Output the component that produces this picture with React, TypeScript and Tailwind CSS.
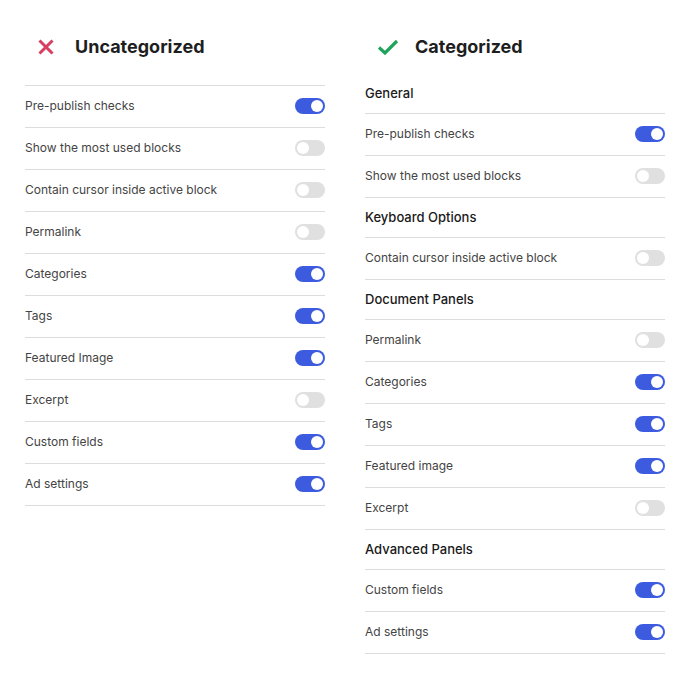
type Row = { label: string; on: boolean }

type Group = { title: string; rows: Row[] }

const flatRows: Row[] = [
  { label: "Pre-publish checks", on: true },
  { label: "Show the most used blocks", on: false },
  { label: "Contain cursor inside active block", on: false },
  { label: "Permalink", on: false },
  { label: "Categories", on: true },
  { label: "Tags", on: true },
  { label: "Featured Image", on: true },
  { label: "Excerpt", on: false },
  { label: "Custom fields", on: true },
  { label: "Ad settings", on: true },
]

const groups: Group[] = [
  {
    title: "General",
    rows: [
      { label: "Pre-publish checks", on: true },
      { label: "Show the most used blocks", on: false },
    ],
  },
  {
    title: "Keyboard Options",
    rows: [{ label: "Contain cursor inside active block", on: false }],
  },
  {
    title: "Document Panels",
    rows: [
      { label: "Permalink", on: false },
      { label: "Categories", on: true },
      { label: "Tags", on: true },
      { label: "Featured image", on: true },
      { label: "Excerpt", on: false },
    ],
  },
  {
    title: "Advanced Panels",
    rows: [
      { label: "Custom fields", on: true },
      { label: "Ad settings", on: true },
    ],
  },
]

function Toggle({ on }: { on: boolean }) {
  return (
    <span
      className={`flex h-4 w-[30px] items-center rounded-full px-[2px] ${
        on ? "justify-end bg-[#3d5bdf]" : "justify-start bg-[#e0e0e0]"
      }`}
    >
      <span className="h-3 w-3 rounded-full bg-white" />
    </span>
  )
}

function SettingRow({ row }: { row: Row }) {
  return (
    <div className="flex h-[42px] items-center justify-between border-b border-[#dcdcdc] pb-px text-[12px] text-[#444]">
      <span>{row.label}</span>
      <Toggle on={row.on} />
    </div>
  )
}

function Header({ good, title }: { good: boolean; title: string }) {
  return (
    <div className="flex h-[74px] items-center pt-[19px]">
      <div className="flex w-[50px] justify-start">
        {good ? (
          <svg width="22" height="16" viewBox="0 0 22 16" className="ml-[12px]" fill="none">
            <path d="M2 8.5 L8 14 L20 2" stroke="#1fa45c" strokeWidth="3.2" strokeLinejoin="miter" />
          </svg>
        ) : (
          <svg width="16" height="16" viewBox="0 0 16 16" className="ml-[13px]" fill="none">
            <path d="M1.5 1.5 L14.5 14.5 M14.5 1.5 L1.5 14.5" stroke="#d83d62" strokeWidth="3" />
          </svg>
        )}
      </div>
      <h2 className="text-[18px] font-bold text-[#1e1e1e]">{title}</h2>
    </div>
  )
}

export default function App() {
  return (
    <div
      className="flex h-[690px] w-[690px] gap-10 bg-white px-[25px]"
      style={{ fontFamily: "Inter, 'Noto Sans', sans-serif" }}
    >
      <section className="w-[300px]">
        <Header good={false} title="Uncategorized" />
        <div className="mt-[11px] border-t border-[#dcdcdc]">
          {flatRows.map((row) => (
            <SettingRow key={row.label} row={row} />
          ))}
        </div>
      </section>
      <section className="w-[300px]">
        <Header good={true} title="Categorized" />
        {groups.map((group) => (
          <div key={group.title}>
            <div className="flex h-[40px] items-center border-b border-[#dcdcdc] text-[13px] font-[450] text-[#1a1a1a]">
              {group.title}
            </div>
            {group.rows.map((row) => (
              <SettingRow key={row.label} row={row} />
            ))}
          </div>
        ))}
      </section>
    </div>
  )
}
